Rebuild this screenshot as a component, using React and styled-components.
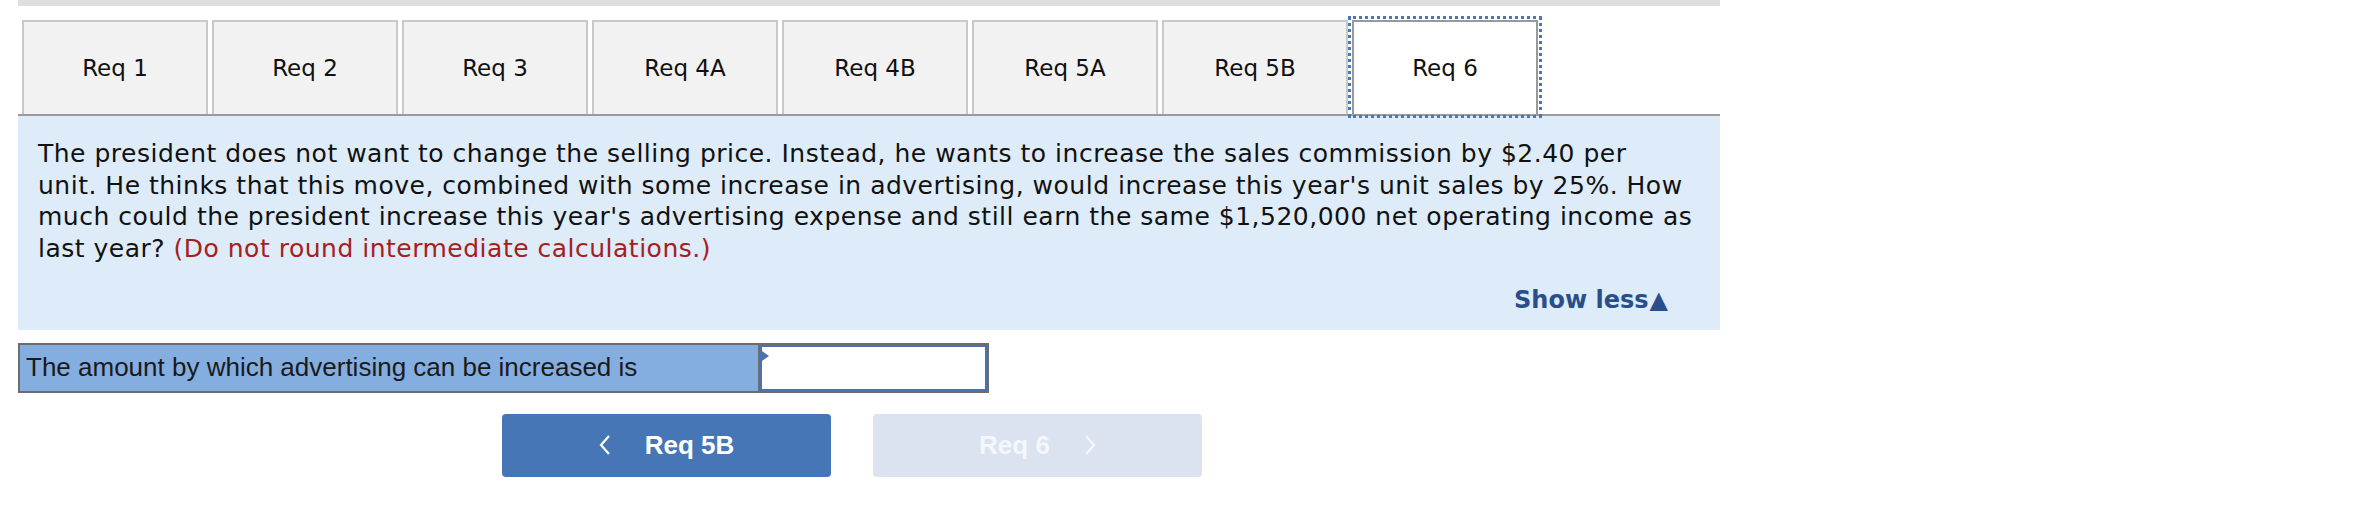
import React from "react";
import styled, { createGlobalStyle } from "styled-components";

const GlobalStyle = createGlobalStyle`
    body {
        margin: 0;
        background: #ffffff;
        font-family: Verdana, "DejaVu Sans", sans-serif;
    }
`;

const tabs = ["Req 1", "Req 2", "Req 3", "Req 4A", "Req 4B", "Req 5A", "Req 5B", "Req 6"];

function App() {
    return (
        <>
            <GlobalStyle />
            <Page>
                <TopBar />
                <TabRow>
                    {tabs.map((t) => (
                        <Tab key={t} $active={t === "Req 6"}>
                            {t}
                        </Tab>
                    ))}
                </TabRow>
                <Panel>
                    <Question>
                        The president does not want to change the selling price. Instead, he wants to increase the sales
                        commission by $2.40 per
                        <br />
                        unit. He thinks that this move, combined with some increase in advertising, would increase this
                        year's unit sales by 25%. How
                        <br />
                        much could the president increase this year's advertising expense and still earn the same
                        $1,520,000 net operating income as
                        <br />
                        last year? <Hint>(Do not round intermediate calculations.)</Hint>
                    </Question>
                    <ShowLess>
                        Show less<Arrow>▲</Arrow>
                    </ShowLess>
                </Panel>
                <AnswerRow>
                    <Label>The amount by which advertising can be increased is</Label>
                    <InputCell>
                        <Input />
                    </InputCell>
                </AnswerRow>
                <NavRow>
                    <NavButton>
                        <Chevron viewBox="0 0 12 22">
                            <polyline points="10,2 2,11 10,20" />
                        </Chevron>
                        Req 5B
                    </NavButton>
                    <NavButton $disabled>
                        Req 6
                        <Chevron viewBox="0 0 12 22">
                            <polyline points="2,2 10,11 2,20" />
                        </Chevron>
                    </NavButton>
                </NavRow>
            </Page>
        </>
    );
}

export default App;

const Page = styled.div`
    margin-left: 18px;
    width: 1702px;
`;

const TopBar = styled.div`
    height: 6px;
    background: #dedede;
`;

const TabRow = styled.div`
    display: flex;
    gap: 4px;
    padding: 14px 0 0 4px;
    border-bottom: 2px solid #9b9b9b;
`;

const Tab = styled.div`
    box-sizing: border-box;
    width: 186px;
    height: 94px;
    display: flex;
    align-items: center;
    justify-content: center;
    font-size: 23px;
    color: #111;
    background: ${(p) => (p.$active ? "#ffffff" : "#f2f2f2")};
    border: 2px solid ${(p) => (p.$active ? "#999999" : "#c9c9c9")};
    border-bottom: 0;
    outline: ${(p) => (p.$active ? "3px dotted #4a77b8" : "none")};
    outline-offset: 1px;
`;

const Panel = styled.div`
    background: #deebf8;
    padding: 22px 6px 13px 20px;
`;

const Question = styled.div`
    font-size: 25px;
    letter-spacing: 0.5px;
    line-height: 31.5px;
    color: #111;
    white-space: nowrap;
`;

const Hint = styled.span`
    color: #a5201c;
`;

const ShowLess = styled.div`
    margin-top: 21px;
    padding-right: 46px;
    text-align: right;
    font-size: 24px;
    line-height: 31.5px;
    font-weight: bold;
    color: #284f8a;
`;

const Arrow = styled.span`
    font-size: 24px;
    margin-left: 1px;
`;

const AnswerRow = styled.div`
    margin-top: 13px;
    display: flex;
    width: 971px;
    height: 50px;
    box-sizing: border-box;
    border: 2px solid #6d6d6d;
`;

const Label = styled.div`
    width: 740px;
    display: flex;
    align-items: center;
    padding-left: 6px;
    box-sizing: border-box;
    background: #84ade0;
    border-right: 2px solid #6d6d6d;
    font-family: "Liberation Sans", Arial, sans-serif;
    font-size: 26px;
    color: #1a1a1a;
`;

const InputCell = styled.div`
    position: relative;
    flex: 1;
    display: flex;

    &::before {
        content: "";
        position: absolute;
        left: 2px;
        top: 6px;
        border-top: 5px solid transparent;
        border-bottom: 5px solid transparent;
        border-left: 7px solid #4a72b2;
    }
`;

const Input = styled.input`
    flex: 1;
    box-sizing: border-box;
    border: 2px solid #4a72b2;
    background: #ffffff;
    margin: 0;
    outline: none;
`;

const NavRow = styled.div`
    display: flex;
    gap: 42px;
    margin-top: 21px;
    padding-left: 484px;
`;

const NavButton = styled.button`
    width: 329px;
    height: 63px;
    display: flex;
    align-items: center;
    justify-content: center;
    gap: 34px;
    border: none;
    border-radius: 4px;
    background: ${(p) => (p.$disabled ? "#dae3ef" : "#4676b6")};
    color: ${(p) => (p.$disabled ? "#f4f7fb" : "#ffffff")};
    font-family: "Liberation Sans", Arial, sans-serif;
    font-weight: bold;
    font-size: 26px;
    cursor: pointer;
`;

const Chevron = styled.svg`
    width: 12px;
    height: 22px;
    fill: none;
    stroke: currentColor;
    stroke-width: 2.2;
`;
